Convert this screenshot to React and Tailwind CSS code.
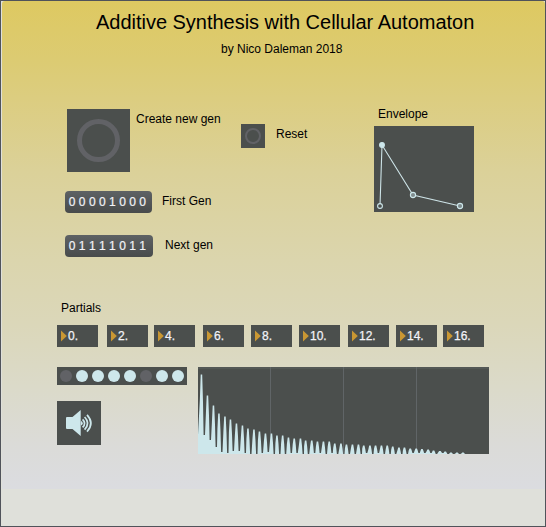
import React from "react";

const partials = [
  ["0.", "ml-0"],
  ["2.", "ml-[9px]"],
  ["4.", "ml-[6px]"],
  ["6.", "ml-[8px]"],
  ["8.", "ml-[7px]"],
  ["10.", "ml-[7px]"],
  ["12.", "ml-[8px]"],
  ["14.", "ml-[7px]"],
  ["16.", "ml-[6px]"],
];

const cells = [0, 1, 1, 1, 1, 0, 1, 1];

// Peak x, peak y and valley y after the peak, in panel pixels.
const peaks = [
  [3.5, 8, 68], [9.5, 29, 73], [15.5, 39, 80], [21, 47, 85], [27, 50, 86],
  [32.5, 53, 84], [38.5, 57, 84], [44.5, 59, 86], [50, 62, 87], [56, 63, 87],
  [61.5, 65, 86], [67.5, 67, 85], [73.5, 67, 87], [79, 69, 87], [84.7, 69, 87],
  [90.5, 71, 86], [96.3, 72, 86], [102.5, 72, 87], [107.7, 74, 87], [113.8, 74, 86],
  [119.5, 75, 86], [125.5, 75, 87], [131.3, 75, 86], [136.8, 77, 87], [143, 77, 87],
  [148.5, 78, 87], [154.5, 78, 87], [160.5, 78, 87], [165.8, 79, 86], [172, 79, 87],
  [177.6, 79, 86], [183.5, 79, 87], [189.3, 79, 87], [194.8, 80, 87], [201, 81, 87],
  [206.5, 81, 87], [212.3, 82, 86], [218.3, 82, 86], [224, 82.5, 86], [230.2, 83, 86],
  [235.6, 84, 87], [242, 84.5, 86], [247.3, 85, 87], [253, 86, 87], [259, 86, 87],
  [265, 86, 87],
];

let wave = "M0 87V68";
peaks.forEach(([x, y, v]) => {
  const depth = v - y;
  wave += `L${x - 1.6} ${y + depth * 0.4}L${x - 0.8} ${y - 0.5}H${x + 0.7}L${x + 1.5} ${y + depth * 0.45}L${x + 2.1} ${v}H${x + 3.5}`;
});
wave += "V87Z";

function Bits({ value, wide }) {
  return (
    <div
      className={`flex h-[22px] items-center rounded-[4px] bg-linear-to-b from-[#5e6265] to-[#484b4b] pl-[2px] text-[12px] leading-none text-[#f2f3f8] ${wide ? "w-[88px]" : "w-[87px]"}`}
    >
      {value.split("").map((c, i) => (
        <span key={i} className="w-[10.1px] text-center [-webkit-text-stroke:0.2px]">
          {c}
        </span>
      ))}
    </div>
  );
}

function PartialBox({ label, gap }) {
  return (
    <div className={`flex h-[22px] w-[41px] shrink-0 items-center bg-[#4b4f4d] pl-[4px] ${gap}`}>
      <svg width="6" height="12" viewBox="0 0 6 12" className="shrink-0">
        <path d="M0 0.4L5.8 6L0 11.6Z" fill="#c99733" />
      </svg>
      <span className="ml-px text-[12px] leading-none text-[#f2f3f8] [-webkit-text-stroke:0.25px]">{label}</span>
    </div>
  );
}

export default function App() {
  return (
    <div className="h-[527px] w-[546px] overflow-hidden border border-[#50535a] bg-[#dfe0da] pl-px font-['Liberation_Sans',Arial,sans-serif] text-[12px] leading-[14px] whitespace-nowrap text-black">
      <main className="flex h-[488px] w-[543px] flex-col rounded-t-[3px] bg-[linear-gradient(to_bottom,#dec961_0%,#dccb72_12%,#dccd80_20%,#dbd199_35%,#dbd5ad_53%,#dbd7b9_66%,#dbdac9_79%,#dbdbd8_91%,#dbdce0_100%)]">
        <h1 className="mt-[9px] ml-[94px] h-[24px] text-[20px] leading-[24px] tracking-[-0.02px]">
          Additive Synthesis with Cellular Automaton
        </h1>
        <p className="mt-[8px] ml-[219px]">by Nico Daleman 2018</p>

        <section className="mt-[51px] flex h-[151px]">
          <div className="ml-[63px] w-[176px] pt-[2px]">
            <div className="flex pl-[2px]">
              <button className="flex size-[63px] items-center justify-center bg-[#4b4f4d]">
                <span className="size-[43px] rounded-full border-[5px] border-[#616266]" />
              </button>
              <span className="mt-[3px] ml-[6px]">Create new gen</span>
            </div>
            <div className="mt-[19px] flex">
              <Bits value="00001000" />
              <span className="mt-[3px] ml-[10px]">First Gen</span>
            </div>
            <div className="mt-[22px] flex">
              <Bits value="01111011" wide />
              <span className="mt-[3px] ml-[12px]">Next gen</span>
            </div>
          </div>
          <div className="mt-[17px] flex h-[24px] w-[133px]">
            <button className="flex size-[24px] items-center justify-center bg-[#4b4f4d]">
              <span className="size-[16px] rounded-full border-2 border-[#616266]" />
            </button>
            <span className="mt-[3px] ml-[11px]">Reset</span>
          </div>
          <div>
            <div className="pl-[4px]">Envelope</div>
            <svg width="100" height="86" className="mt-[5px] bg-[#4b4f4d]">
              <path d="M6 80L8 19L39 69L86 80" fill="none" stroke="#cde3e7" strokeWidth="1.1" />
              <g stroke="#cde7eb" strokeWidth="1.1">
                <circle cx="6" cy="80" r="2.4" fill="#4b4f4d" />
                <circle cx="8" cy="19" r="2.4" fill="#cde7eb" />
                <circle cx="39" cy="69" r="2.6" fill="#7f8c8e" />
                <circle cx="86" cy="80" r="2.6" fill="#7f8c8e" />
              </g>
            </svg>
          </div>
        </section>

        <section className="mt-[43px] ml-[55px]">
          <div className="pl-[4px]">Partials</div>
          <div className="mt-[10px] flex">
            {partials.map(([label, gap]) => (
              <PartialBox key={label} label={label} gap={gap} />
            ))}
          </div>
        </section>

        <section className="mt-[20px] ml-[55px] flex">
          <div className="w-[141px]">
            <div className="flex h-[18px] w-[130px] items-center gap-[4px] bg-[#4b4f4d] pl-[3px]">
              {cells.map((on, i) => (
                <span key={i} className={`size-[12px] rounded-full ${on ? "bg-[#cde7eb]" : "bg-[#616266]"}`} />
              ))}
            </div>
            <svg width="44" height="44" viewBox="0 0 44 44" className="mt-[16px] bg-[#4b4f4d]">
              <path d="M10 16H15.5L23.7 9V35L15.5 28H10Q9 28 9 27V17Q9 16 10 16Z" fill="#cde7eb" />
              <path d="M24 20A2.4 2.4 0 0 1 24 24.6Z" fill="#cde7eb" />
              <g fill="none" stroke="#cde7eb" strokeWidth="1.7">
                <path d="M25.6 18.3Q29.6 22.2 25.6 26.4" />
                <path d="M27.6 16Q33.6 22.2 27.6 28.6" />
                <path d="M30 13.8Q37.8 22.2 30 30.6" />
              </g>
            </svg>
          </div>
          <svg width="291" height="87" className="bg-[#4b4f4d]">
            <rect width="291" height="2" fill="#535856" />
            <path d="M72.5 0V87M145.5 0V87M218.5 0V87" stroke="#606567" />
            <path d={wave} fill="#cde7eb" />
          </svg>
        </section>
      </main>
    </div>
  );
}
